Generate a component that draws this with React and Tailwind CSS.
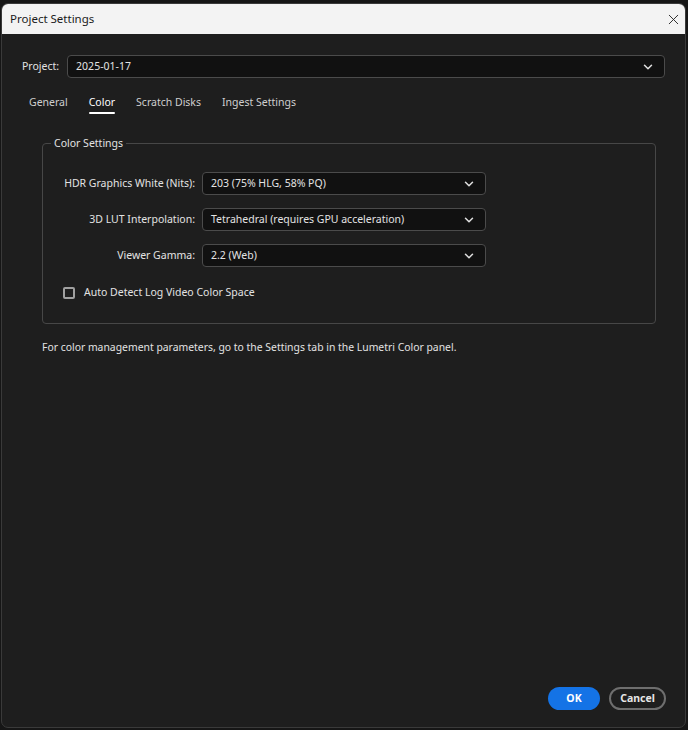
import { ChevronDown, X } from 'lucide-react';

const font = { fontFamily: '"Noto Sans", "Open Sans", sans-serif' };

function Select({ value, className = '' }) {
  return (
    <div className={`flex items-center justify-between h-[23px] rounded-[4px] border border-[#4b4b4b] bg-[#111111] pl-[8px] pr-[9px] ${className}`}>
      <span className="text-[10.5px] text-[#e3e3e3] leading-none">{value}</span>
      <ChevronDown size={14} strokeWidth={2.6} className="text-[#dcdcdc]" />
    </div>
  );
}

const ROWS = [
  { label: 'HDR Graphics White (Nits):', value: '203 (75% HLG, 58% PQ)' },
  { label: '3D LUT Interpolation:', value: 'Tetrahedral (requires GPU acceleration)' },
  { label: 'Viewer Gamma:', value: '2.2 (Web)' },
];

const TABS = ['General', 'Color', 'Scratch Disks', 'Ingest Settings'];

export default function App() {
  return (
    <div className="w-[688px] h-[730px] bg-[#161616] pt-[3px] pl-[1px] pr-[2px] pb-[2px]" style={font}>
      <div className="flex flex-col h-full rounded-[7px] overflow-hidden border border-[#3a3a3a] bg-[#1e1e1e]">
        <div className="flex items-center justify-between h-[30px] bg-[#f3f3f3] pl-[8px] pr-[3px]">
          <span className="text-[11.5px] text-[#1a1a1a]">Project Settings</span>
          <X size={17} strokeWidth={1.3} className="text-[#222]" />
        </div>

        <div className="flex flex-col flex-1 px-[20px]">
          <div className="flex items-center gap-[8px] mt-[21px]">
            <span className="text-[10.5px] text-[#e3e3e3]">Project:</span>
            <Select value="2025-01-17" className="flex-1 h-[22px]" />
          </div>

          <div className="flex gap-[21px] mt-[16px] ml-[7px]">
            {TABS.map((t) => (
              <div key={t} className="flex flex-col">
                <span className={`text-[10.5px] leading-[16px] ${t === 'Color' ? 'text-white' : 'text-[#cfcfcf]'}`}>{t}</span>
                <div className={`h-[2px] mt-[2px] rounded ${t === 'Color' ? 'bg-white' : 'bg-transparent'}`} />
              </div>
            ))}
          </div>

          <div className="relative ml-[20px] mr-[9px] mt-[29px] h-[181px] rounded-[4px] border border-[#474747]">
            <span className="absolute -top-[9px] left-[8px] px-[3px] bg-[#1e1e1e] text-[10.5px] leading-[16px] text-[#e3e3e3]">Color Settings</span>
            <div className="flex flex-col gap-[13px] pt-[28px]">
              {ROWS.map((r) => (
                <div key={r.label} className="flex items-center">
                  <span className="w-[152px] text-right text-[10.5px] text-[#e3e3e3]">{r.label}</span>
                  <Select value={r.value} className="ml-[7px] w-[284px]" />
                </div>
              ))}
            </div>
            <div className="flex items-center gap-[9px] mt-[18px] ml-[20px]">
              <div className="w-[12px] h-[12px] rounded-[2px] border-2 border-[#a0a0a0]" />
              <span className="text-[10.5px] text-[#e3e3e3]">Auto Detect Log Video Color Space</span>
            </div>
          </div>

          <p className="mt-[16px] ml-[20px] text-[10.4px] text-[#e3e3e3]">For color management parameters, go to the Settings tab in the Lumetri Color panel.</p>

          <div className="flex-1" />

          <div className="flex justify-end gap-[9px] mb-[17px] mr-[-1px]">
            <button className="w-[52px] h-[23px] rounded-full bg-[#1473e6] text-white text-[10.5px] font-bold">OK</button>
            <button className="w-[57px] h-[23px] rounded-full border-2 border-[#6e6e6e] text-[#e6e6e6] text-[10.5px] font-bold">Cancel</button>
          </div>
        </div>
      </div>
    </div>
  );
}
